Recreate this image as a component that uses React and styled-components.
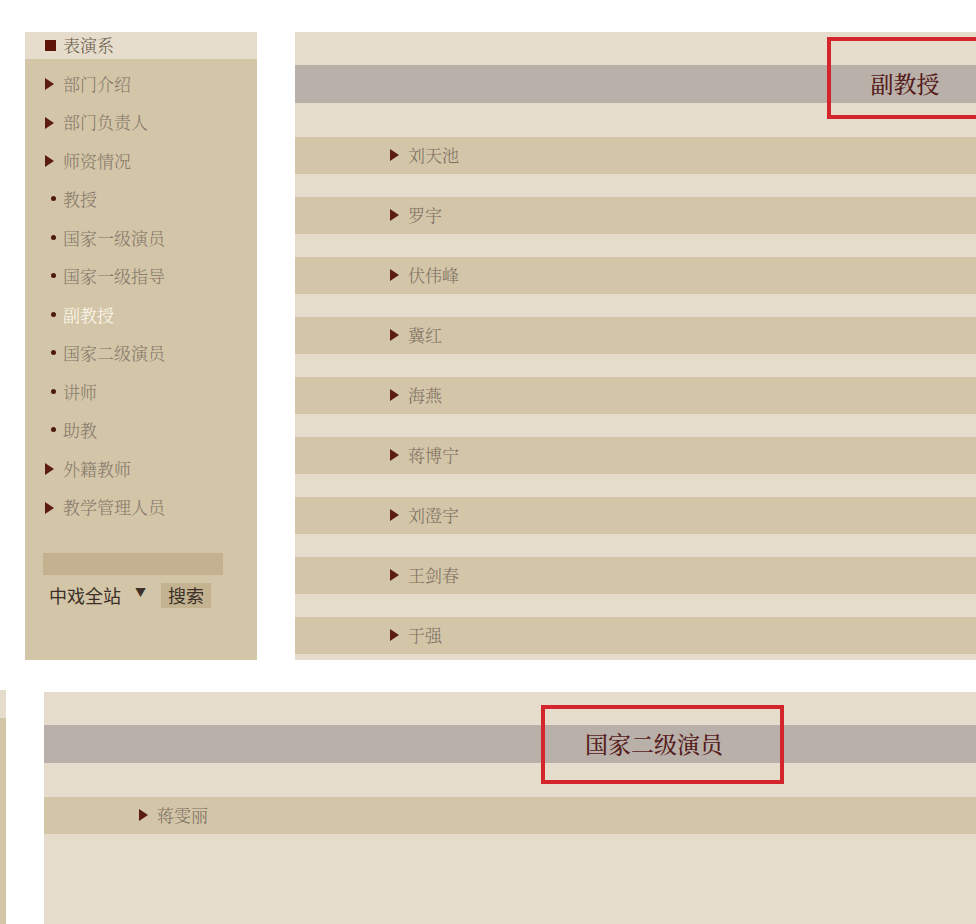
import React from "react";
import styled, { createGlobalStyle } from "styled-components";

const Global = createGlobalStyle`
  html, body { margin: 0; padding: 0; background: #ffffff; overflow: hidden; }
  body { font-family: "Noto Serif CJK SC", "Noto Sans CJK SC", serif; }
`;

const Page = styled.div`
  width: 976px;
  height: 924px;
  overflow: hidden;
  display: flex;
  flex-direction: column;
`;

const TopSection = styled.div`
  display: flex;
  gap: 38px;
  padding: 32px 0 0 25px;
`;

const BottomSection = styled.div`
  display: flex;
  gap: 38px;
  margin-top: 32px;
  flex: 1;
`;

const Sidebar = styled.div`
  width: 232px;
  height: 628px;
  background: #d3c5a7;
  flex-shrink: 0;
  display: flex;
  flex-direction: column;
`;

const SideHeader = styled.div`
  height: 27px;
  box-sizing: border-box;
  padding-bottom: 2px;
  background: #e5dccb;
  display: flex;
  align-items: center;
  padding-left: 20px;
  gap: 7px;
  font-size: 17px;
  color: #6b5c4c;
  font-weight: 300;
`;

const Square = styled.span`
  width: 11px;
  height: 11px;
  background: #5e1408;
  display: block;
  margin-top: 2px;
`;

const SideList = styled.ul`
  list-style: none;
  margin: 6px 0 0;
  padding: 0;
`;

const SideItem = styled.li`
  height: 38.5px;
  box-sizing: border-box;
  padding-bottom: 2px;
  display: flex;
  align-items: center;
  padding-left: 20px;
  font-size: 17px;
  font-weight: 300;
  color: ${(p) => (p.$active ? "#fffaf0" : "#84776a")};
`;

const Marker = styled.span`
  width: 18px;
  display: flex;
  align-items: center;
  justify-content: ${(p) => (p.$dot ? "center" : "flex-start")};
`;

const Tri = styled.span`
  width: 0;
  height: 0;
  margin-top: 2px;
  border-top: 6px solid transparent;
  border-bottom: 6px solid transparent;
  border-left: 9px solid #5b1d10;
`;

const Dot = styled.span`
  width: 5px;
  height: 5px;
  border-radius: 50%;
  background: #4e1a0c;
  margin: 0 0 0 -2px;
`;

const SearchBox = styled.div`
  margin: 26px 0 0 18px;
  width: 180px;
  height: 22px;
  background: #c4b18f;
`;

const SearchRow = styled.div`
  display: flex;
  align-items: center;
  margin: 7px 0 0 24px;
  font-family: "Noto Sans CJK SC", sans-serif;
  font-size: 18px;
  color: #3b3027;
`;

const Arrow = styled.span`
  font-size: 11px;
  margin: -6px 15px 0 14px;
`;

const SearchBtn = styled.span`
  background: #c3b391;
  height: 25px;
  padding: 0 7px;
  display: flex;
  align-items: center;
`;

const Panel = styled.div`
  position: relative;
  width: 1220px;
  flex-shrink: 0;
  background: #e5dccb;
  padding: 33px 0 6px;
  box-sizing: border-box;
  ${(p) => p.$fill && "height: 100%;"}
`;

const HeadBand = styled.div`
  height: 38px;
  box-sizing: border-box;
  padding-bottom: 2px;
  background: #b9b1a9;
  display: flex;
  align-items: center;
  justify-content: center;
  font-size: 23px;
  color: #561c1c;
  font-weight: 500;
`;

const Rows = styled.div`
  margin-top: 34px;
  display: flex;
  flex-direction: column;
  gap: 23px;
`;

const Row = styled.div`
  height: 37px;
  box-sizing: border-box;
  padding-bottom: 3px;
  background: #d3c5a8;
  display: flex;
  align-items: center;
  padding-left: 95px;
  font-size: 17px;
  font-weight: 300;
  color: #7d6f62;
`;

const RowTri = styled(Tri)`
  margin-right: 9px;
`;

const RedBox = styled.div`
  position: absolute;
  left: ${(p) => p.$left}px;
  top: ${(p) => p.$top}px;
  width: ${(p) => p.$w}px;
  height: ${(p) => p.$h}px;
  border: 4px solid #d4252d;
  box-sizing: border-box;
`;

const Strip = styled.div`
  width: 6px;
  flex-shrink: 0;
  margin-top: -2px;
  background: linear-gradient(#e5dccb 0 28px, #d3c5a7 28px);
`;

const sideItems = [
  { t: "部门介绍", k: "tri" },
  { t: "部门负责人", k: "tri" },
  { t: "师资情况", k: "tri" },
  { t: "教授", k: "dot" },
  { t: "国家一级演员", k: "dot" },
  { t: "国家一级指导", k: "dot" },
  { t: "副教授", k: "dot", active: true },
  { t: "国家二级演员", k: "dot" },
  { t: "讲师", k: "dot" },
  { t: "助教", k: "dot" },
  { t: "外籍教师", k: "tri" },
  { t: "教学管理人员", k: "tri" },
];

const names = ["刘天池", "罗宇", "伏伟峰", "冀红", "海燕", "蒋博宁", "刘澄宇", "王剑春", "于强"];

export default function App() {
  return (
    <Page>
      <Global />
      <TopSection>
        <Sidebar>
          <SideHeader>
            <Square />
            表演系
          </SideHeader>
          <SideList>
            {sideItems.map((it) => (
              <SideItem key={it.t} $active={it.active}>
                <Marker $dot={it.k === "dot"}>{it.k === "tri" ? <Tri /> : <Dot />}</Marker>
                {it.t}
              </SideItem>
            ))}
          </SideList>
          <SearchBox />
          <SearchRow>
            中戏全站
            <Arrow>▼</Arrow>
            <SearchBtn>搜索</SearchBtn>
          </SearchRow>
        </Sidebar>
        <Panel>
          <HeadBand>副教授</HeadBand>
          <Rows>
            {names.map((n) => (
              <Row key={n}>
                <RowTri />
                {n}
              </Row>
            ))}
          </Rows>
          <RedBox $left={532} $top={5} $w={160} $h={82} />
        </Panel>
      </TopSection>
      <BottomSection>
        <Strip />
        <Panel $fill>
          <HeadBand>国家二级演员</HeadBand>
          <Rows>
            <Row>
              <RowTri />
              蒋雯丽
            </Row>
          </Rows>
          <RedBox $left={497} $top={13} $w={243} $h={79} />
        </Panel>
      </BottomSection>
    </Page>
  );
}
